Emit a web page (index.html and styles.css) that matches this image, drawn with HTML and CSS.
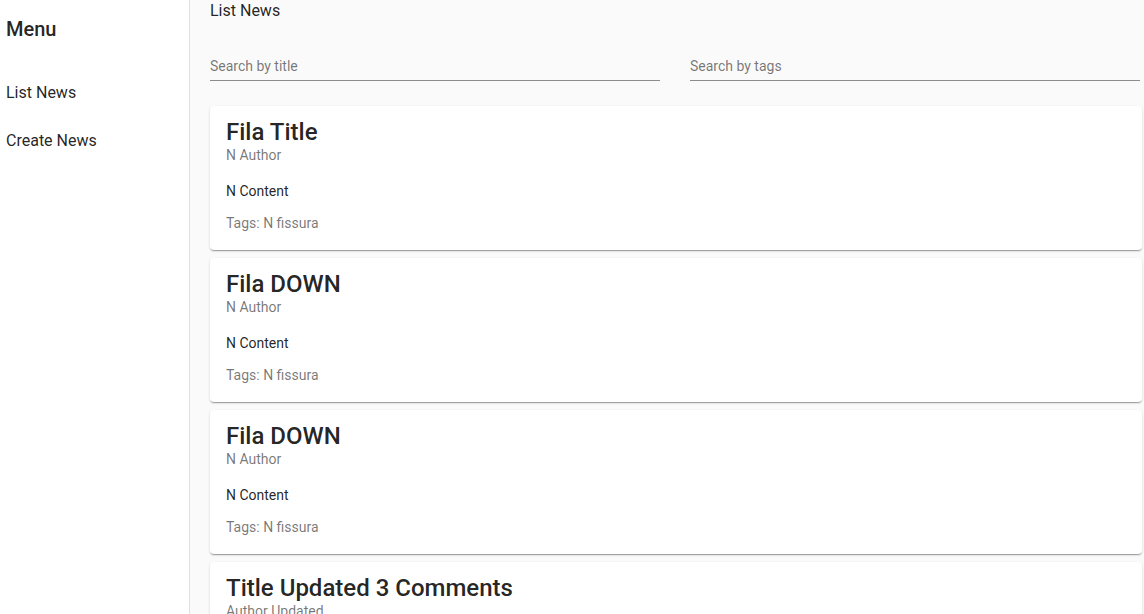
FILE: index.html
```html
<!DOCTYPE html>
<html>
<head>
<meta charset="utf-8">
<link rel="stylesheet" href="styles.css">
</head>
<body>
<div class="app">
  <aside class="sidebar">
    <div class="menu-title">Menu</div>
    <nav class="nav">
      <a class="nav-item">List News</a>
      <a class="nav-item">Create News</a>
    </nav>
  </aside>
  <main class="main">
    <div class="page-title">List News</div>
    <div class="filters">
      <div class="field"><span class="placeholder">Search by title</span></div>
      <div class="field"><span class="placeholder">Search by tags</span></div>
    </div>
    <div class="cards">
      <div class="card">
        <div class="card-title">Fila Title</div>
        <div class="card-sub">N Author</div>
        <div class="card-content">N Content</div>
        <div class="card-tags">Tags: N fissura</div>
      </div>
      <div class="card">
        <div class="card-title">Fila DOWN</div>
        <div class="card-sub">N Author</div>
        <div class="card-content">N Content</div>
        <div class="card-tags">Tags: N fissura</div>
      </div>
      <div class="card">
        <div class="card-title">Fila DOWN</div>
        <div class="card-sub">N Author</div>
        <div class="card-content">N Content</div>
        <div class="card-tags">Tags: N fissura</div>
      </div>
      <div class="card">
        <div class="card-title">Title Updated 3 Comments</div>
        <div class="card-sub">Author Updated</div>
        <div class="card-content">Content Updated</div>
        <div class="card-tags">Tags: Updated</div>
      </div>
    </div>
  </main>
</div>
</body>
</html>
```
FILE: styles.css
```css
html, body {
  margin: 0;
  padding: 0;
  height: 100%;
  overflow: hidden;
}
body {
  font-family: Roboto, "Liberation Sans", sans-serif;
  color: rgba(0,0,0,0.87);
  background: #fafafa;
}
.app {
  display: flex;
  height: 614px;
}
.sidebar {
  width: 189px;
  flex: none;
  background: #fff;
  border-right: 1px solid #e0e0e0;
}
.menu-title {
  font-size: 20px;
  font-weight: 500;
  line-height: 32px;
  padding: 13px 6px 0;
}
.nav {
  display: flex;
  flex-direction: column;
  padding-top: 24px;
}
.nav-item {
  font-size: 16px;
  height: 48px;
  line-height: 48px;
  padding-left: 6px;
  color: rgba(0,0,0,0.87);
}
.main {
  flex: 1;
  padding: 0 2px 0 20px;
  overflow: hidden;
}
.page-title {
  font-size: 16px;
  line-height: 20px;
  padding-top: 1px;
}
.filters {
  display: flex;
  gap: 30px;
  padding-right: 2px;
  margin-top: 35px;
}
.field {
  flex: 1;
  border-bottom: 1px solid #8c8c8c;
  height: 24px;
}
.placeholder {
  font-size: 14px;
  line-height: 20px;
  color: rgba(0,0,0,0.54);
}
.cards {
  display: flex;
  flex-direction: column;
  gap: 8px;
  margin-top: 25px;
}
.card {
  background: #fff;
  border-radius: 4px;
  padding: 16px 16px 17px;
  box-shadow: 0 2px 1px -1px rgba(0,0,0,.2), 0 1px 1px 0 rgba(0,0,0,.14), 0 1px 3px 0 rgba(0,0,0,.12);
}
.card-title {
  font-size: 24px;
  font-weight: 500;
  line-height: 20px;
}
.card-sub {
  font-size: 14px;
  line-height: 20px;
  margin-top: 3px;
  color: rgba(0,0,0,0.54);
}
.card-content {
  font-size: 14px;
  line-height: 20px;
  margin-top: 16px;
}
.card-tags {
  font-size: 14px;
  line-height: 20px;
  margin-top: 12px;
  color: rgba(0,0,0,0.54);
}
```
